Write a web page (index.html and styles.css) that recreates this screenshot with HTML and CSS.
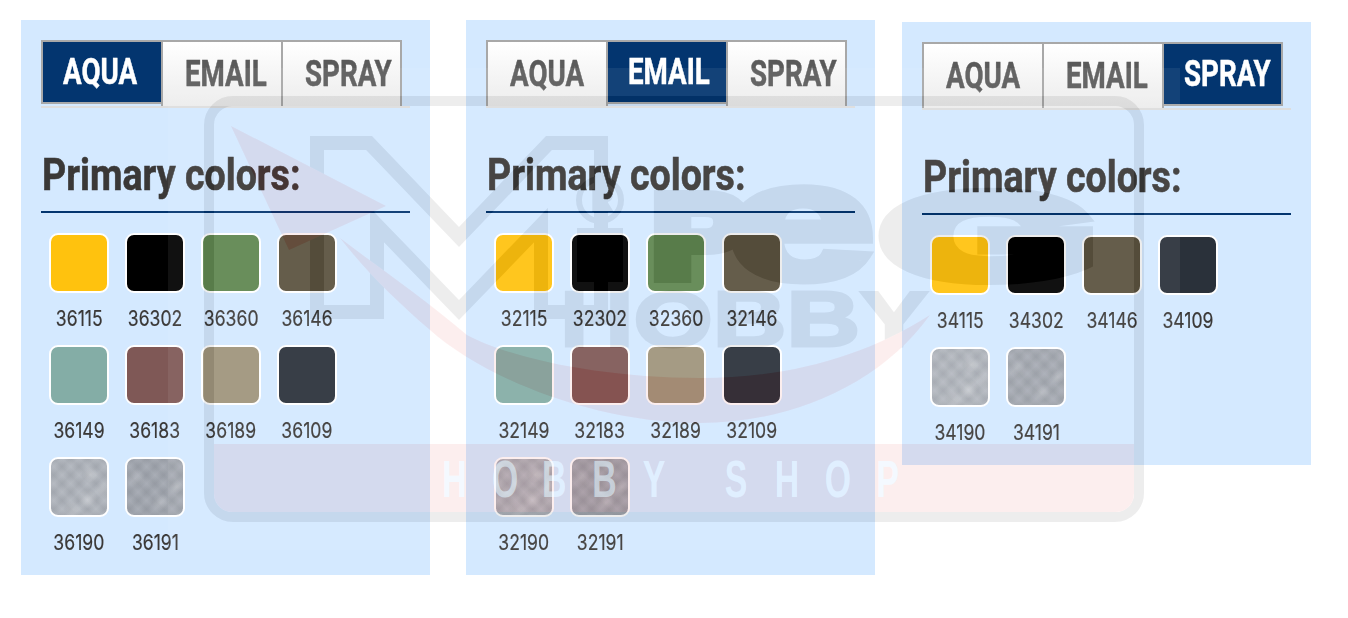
FILE: index.html
```html
<!DOCTYPE html>
<html lang="en">
<head>
<meta charset="utf-8">
<title>Primary colors</title>
<link rel="stylesheet" href="styles.css">
</head>
<body>
<main class="page">
  <section class="panel">
    <div class="tabs">
      <a class="tab active"><span class="tab-text">AQUA</span></a><a class="tab"><span class="tab-text">EMAIL</span></a><a class="tab"><span class="tab-text">SPRAY</span></a>
    </div>
    <h2 class="title"><span class="title-text">Primary colors:</span></h2>
    <ul class="swatches">
      <li class="item"><span class="chip c-yellow"></span><span class="code">36115</span></li>
      <li class="item"><span class="chip c-black"></span><span class="code">36302</span></li>
      <li class="item"><span class="chip c-green"></span><span class="code">36360</span></li>
      <li class="item"><span class="chip c-olive"></span><span class="code">36146</span></li>
      <li class="item"><span class="chip c-teal"></span><span class="code">36149</span></li>
      <li class="item"><span class="chip c-brown"></span><span class="code">36183</span></li>
      <li class="item"><span class="chip c-tan"></span><span class="code">36189</span></li>
      <li class="item"><span class="chip c-slate"></span><span class="code">36109</span></li>
      <li class="item"><span class="chip c-silver"></span><span class="code">36190</span></li>
      <li class="item"><span class="chip c-steel"></span><span class="code">36191</span></li>
    </ul>
  </section>
  <section class="panel">
    <div class="tabs">
      <a class="tab"><span class="tab-text">AQUA</span></a><a class="tab active"><span class="tab-text">EMAIL</span></a><a class="tab"><span class="tab-text">SPRAY</span></a>
    </div>
    <h2 class="title"><span class="title-text">Primary colors:</span></h2>
    <ul class="swatches">
      <li class="item"><span class="chip c-yellow"></span><span class="code">32115</span></li>
      <li class="item"><span class="chip c-black"></span><span class="code">32302</span></li>
      <li class="item"><span class="chip c-green"></span><span class="code">32360</span></li>
      <li class="item"><span class="chip c-olive"></span><span class="code">32146</span></li>
      <li class="item"><span class="chip c-teal"></span><span class="code">32149</span></li>
      <li class="item"><span class="chip c-brown"></span><span class="code">32183</span></li>
      <li class="item"><span class="chip c-tan"></span><span class="code">32189</span></li>
      <li class="item"><span class="chip c-slate"></span><span class="code">32109</span></li>
      <li class="item"><span class="chip c-silver"></span><span class="code">32190</span></li>
      <li class="item"><span class="chip c-steel"></span><span class="code">32191</span></li>
    </ul>
  </section>
  <section class="panel panel-low">
    <div class="tabs">
      <a class="tab"><span class="tab-text">AQUA</span></a><a class="tab"><span class="tab-text">EMAIL</span></a><a class="tab active"><span class="tab-text">SPRAY</span></a>
    </div>
    <h2 class="title"><span class="title-text">Primary colors:</span></h2>
    <ul class="swatches">
      <li class="item"><span class="chip c-yellow"></span><span class="code">34115</span></li>
      <li class="item"><span class="chip c-black"></span><span class="code">34302</span></li>
      <li class="item"><span class="chip c-olive"></span><span class="code">34146</span></li>
      <li class="item"><span class="chip c-slate"></span><span class="code">34109</span></li>
      <li class="item"><span class="chip c-silver"></span><span class="code">34190</span></li>
      <li class="item"><span class="chip c-steel"></span><span class="code">34191</span></li>
    </ul>
  </section>
</main>
<svg class="watermark" width="1348" height="618" viewBox="0 0 1348 618" aria-hidden="true">
  <defs>
    <g id="mark" fill="currentColor" stroke="none">
      <rect x="209" y="101" width="930" height="416" rx="24" fill="none" stroke="currentColor" stroke-width="10"/>
      <path d="M317 143H369L459 237L549 143H601V312H541V225L459 310L377 225V312H317Z" fill="none" stroke="currentColor" stroke-width="14"/>
      <circle cx="600" cy="200" r="21" fill="none" stroke="currentColor" stroke-width="6"/>
      <text x="590" y="212" class="wm-r">R</text>
      <rect x="577" y="228" width="46" height="54"/>
      <text x="653" y="276" class="wm-p" textLength="94" lengthAdjust="spacingAndGlyphs" stroke="currentColor" stroke-width="14">P</text>
      <text x="728" y="278" class="wm-e" textLength="146" lengthAdjust="spacingAndGlyphs" stroke="currentColor" stroke-width="10">e</text>
      <text x="886" y="276" class="wm-p" textLength="205" lengthAdjust="spacingAndGlyphs" stroke="currentColor" stroke-width="16">G</text>
      <text x="560" y="346" class="wm-hobby" textLength="368" lengthAdjust="spacingAndGlyphs" stroke="currentColor" stroke-width="3">HOBBY</text>
    </g>
    <g id="red" fill="currentColor" stroke="none">
      <path d="M231 126L386 206L289 250Z"/>
      <path d="M340 238C375 265 420 295 467 335C510 358 600 378 700 378C780 378 860 360 930 315C880 385 790 423 700 423C590 423 480 375 430 330C395 300 365 270 340 238Z"/>
      <path d="M214 444H1134V494A18 18 0 0 1 1116 512H232A18 18 0 0 1 214 494Z"/>
    </g>
    <text id="shop" x="680 757 834 911 989 1115 1192 1269 1348" y="497" class="wm-shop" transform="scale(.65 1)">HOBBYSHOP</text>
    <mask id="no-art" maskUnits="userSpaceOnUse" x="0" y="0" width="1348" height="618">
      <rect width="1348" height="618" fill="#fff"/>
      <use href="#mark" color="#000"/>
      <use href="#red" color="#000"/>
      <use href="#shop" fill="#000"/>
    </mask>
    <mask id="no-red" maskUnits="userSpaceOnUse" x="0" y="0" width="1348" height="618">
      <rect width="1348" height="618" fill="#fff"/>
      <use href="#red" color="#000"/>
    </mask>
    <mask id="no-shop" maskUnits="userSpaceOnUse" x="0" y="0" width="1348" height="618">
      <rect width="1348" height="618" fill="#fff"/>
      <use href="#shop" fill="#000"/>
    </mask>
  </defs>
  <rect x="168" y="68" width="1012" height="482" fill="#fff" fill-opacity=".067" mask="url(#no-art)"/>
  <g opacity=".067" mask="url(#no-red)"><use href="#mark" color="#000"/></g>
  <g opacity=".065" mask="url(#no-shop)"><use href="#red" color="#e01818"/></g>
  <use href="#shop" fill="#ebf5ff" fill-opacity=".55"/>
</svg>
</body>
</html>
```
FILE: styles.css
```css
* { box-sizing: border-box; }
html, body { margin: 0; padding: 0; background: #fff; }
body { position: relative; width: 1348px; height: 618px; overflow: hidden; font-family: "Roboto", sans-serif; }
.page { display: flex; align-items: flex-start; padding: 20px 0 0 21px; }
.panel { width: 409px; padding: 20px 20px 6px; background: #d4e9ff; }
.panel + .panel { margin-left: 36px; }
.panel-low { margin-top: 2px; margin-left: 27px !important; }
.tabs { display: flex; align-items: flex-start; height: 68px; border-bottom: 2px solid #dddddd; }
.tab { flex: 0 0 122px; min-width: 0; margin-right: -2px; height: 66px; padding: 12px 0 0 22px; border: 2px solid #a8a8a8; border-bottom: 0; background: linear-gradient(#ffffff, #ececec); color: #5a5a5a; font-size: 36px; line-height: 40px; font-weight: 700; white-space: nowrap; overflow: hidden; }
.tab:last-child { flex-basis: 121px; margin-right: 0; }
.tab.active { height: 64px; padding: 10px 0 0 20px; border-bottom: 2px solid #a8a8a8; background: #03356f; color: #fff; }
.tab-text { display: inline-block; transform: scaleX(.77); transform-origin: left center; -webkit-text-stroke: .5px currentColor; }
.title { margin: 0; height: 105px; padding: 42px 0 0 1px; border-bottom: 2px solid #03356f; color: #3a3837; font-size: 45px; line-height: 50px; font-weight: 700; white-space: nowrap; }
.title-text { display: inline-block; transform: scaleX(.835); transform-origin: left center; -webkit-text-stroke: .6px currentColor; }
.swatches { display: grid; grid-template-columns: repeat(4, 76px); grid-auto-rows: 112px; margin: 20px 0 0; padding: 0; list-style: none; }
.item { display: flex; flex-direction: column; align-items: center; color: #3a3837; font-family: "Inter", sans-serif; font-size: 22px; line-height: 26px; }
.chip { display: block; flex: none; width: 60px; height: 60px; margin-bottom: 12px; border: 2px solid #fff; border-radius: 9px; }
.code { display: block; transform: scaleX(.8); -webkit-text-stroke: .2px currentColor; }
.c-yellow { background: #ffc20e; }
.c-black { background: #000; }
.c-green { background: #5f8650; }
.c-olive { background: #5b523f; }
.c-teal { background: #84ada6; }
.c-brown { background: #7f5856; }
.c-tan { background: #9f947c; }
.c-slate { background: #2a313a; }
.c-silver {
  background:
    radial-gradient(circle at 70% 28%, rgba(255,255,255,.28), transparent 14%),
    radial-gradient(circle at 65% 72%, rgba(255,255,255,.26), transparent 18%),
    radial-gradient(circle at 40% 90%, rgba(255,255,255,.2), transparent 14%),
    radial-gradient(circle at 92% 55%, rgba(255,255,255,.18), transparent 14%),
    repeating-linear-gradient(45deg, rgba(255,255,255,.05), rgba(0,0,0,.035) 6px, rgba(255,255,255,.05) 12px),
    repeating-linear-gradient(-45deg, rgba(255,255,255,.05), rgba(0,0,0,.035) 6px, rgba(255,255,255,.05) 12px),
    #aeb3bb;
}
.c-steel {
  background:
    radial-gradient(circle at 15% 35%, rgba(255,255,255,.15), transparent 16%),
    radial-gradient(circle at 60% 78%, rgba(255,255,255,.2), transparent 16%),
    radial-gradient(circle at 88% 50%, rgba(255,255,255,.22), transparent 12%),
    repeating-linear-gradient(45deg, rgba(255,255,255,.04), rgba(0,0,0,.04) 6px, rgba(255,255,255,.04) 12px),
    repeating-linear-gradient(-45deg, rgba(255,255,255,.04), rgba(0,0,0,.04) 6px, rgba(255,255,255,.04) 12px),
    #a2a7b0;
}
.watermark { position: absolute; left: 0; top: 0; pointer-events: none; }
.wm-p { font-family: "Liberation Sans", sans-serif; font-weight: 700; font-size: 115px; }
.wm-e { font-family: "Liberation Sans", sans-serif; font-weight: 700; font-size: 165px; }
.wm-hobby { font-family: "Liberation Sans", sans-serif; font-weight: 700; font-size: 78px; }
.wm-r { font-family: "Liberation Sans", sans-serif; font-weight: 700; font-size: 34px; }
.wm-shop { font-family: "Liberation Sans", sans-serif; font-weight: 700; font-size: 52px; }
```
